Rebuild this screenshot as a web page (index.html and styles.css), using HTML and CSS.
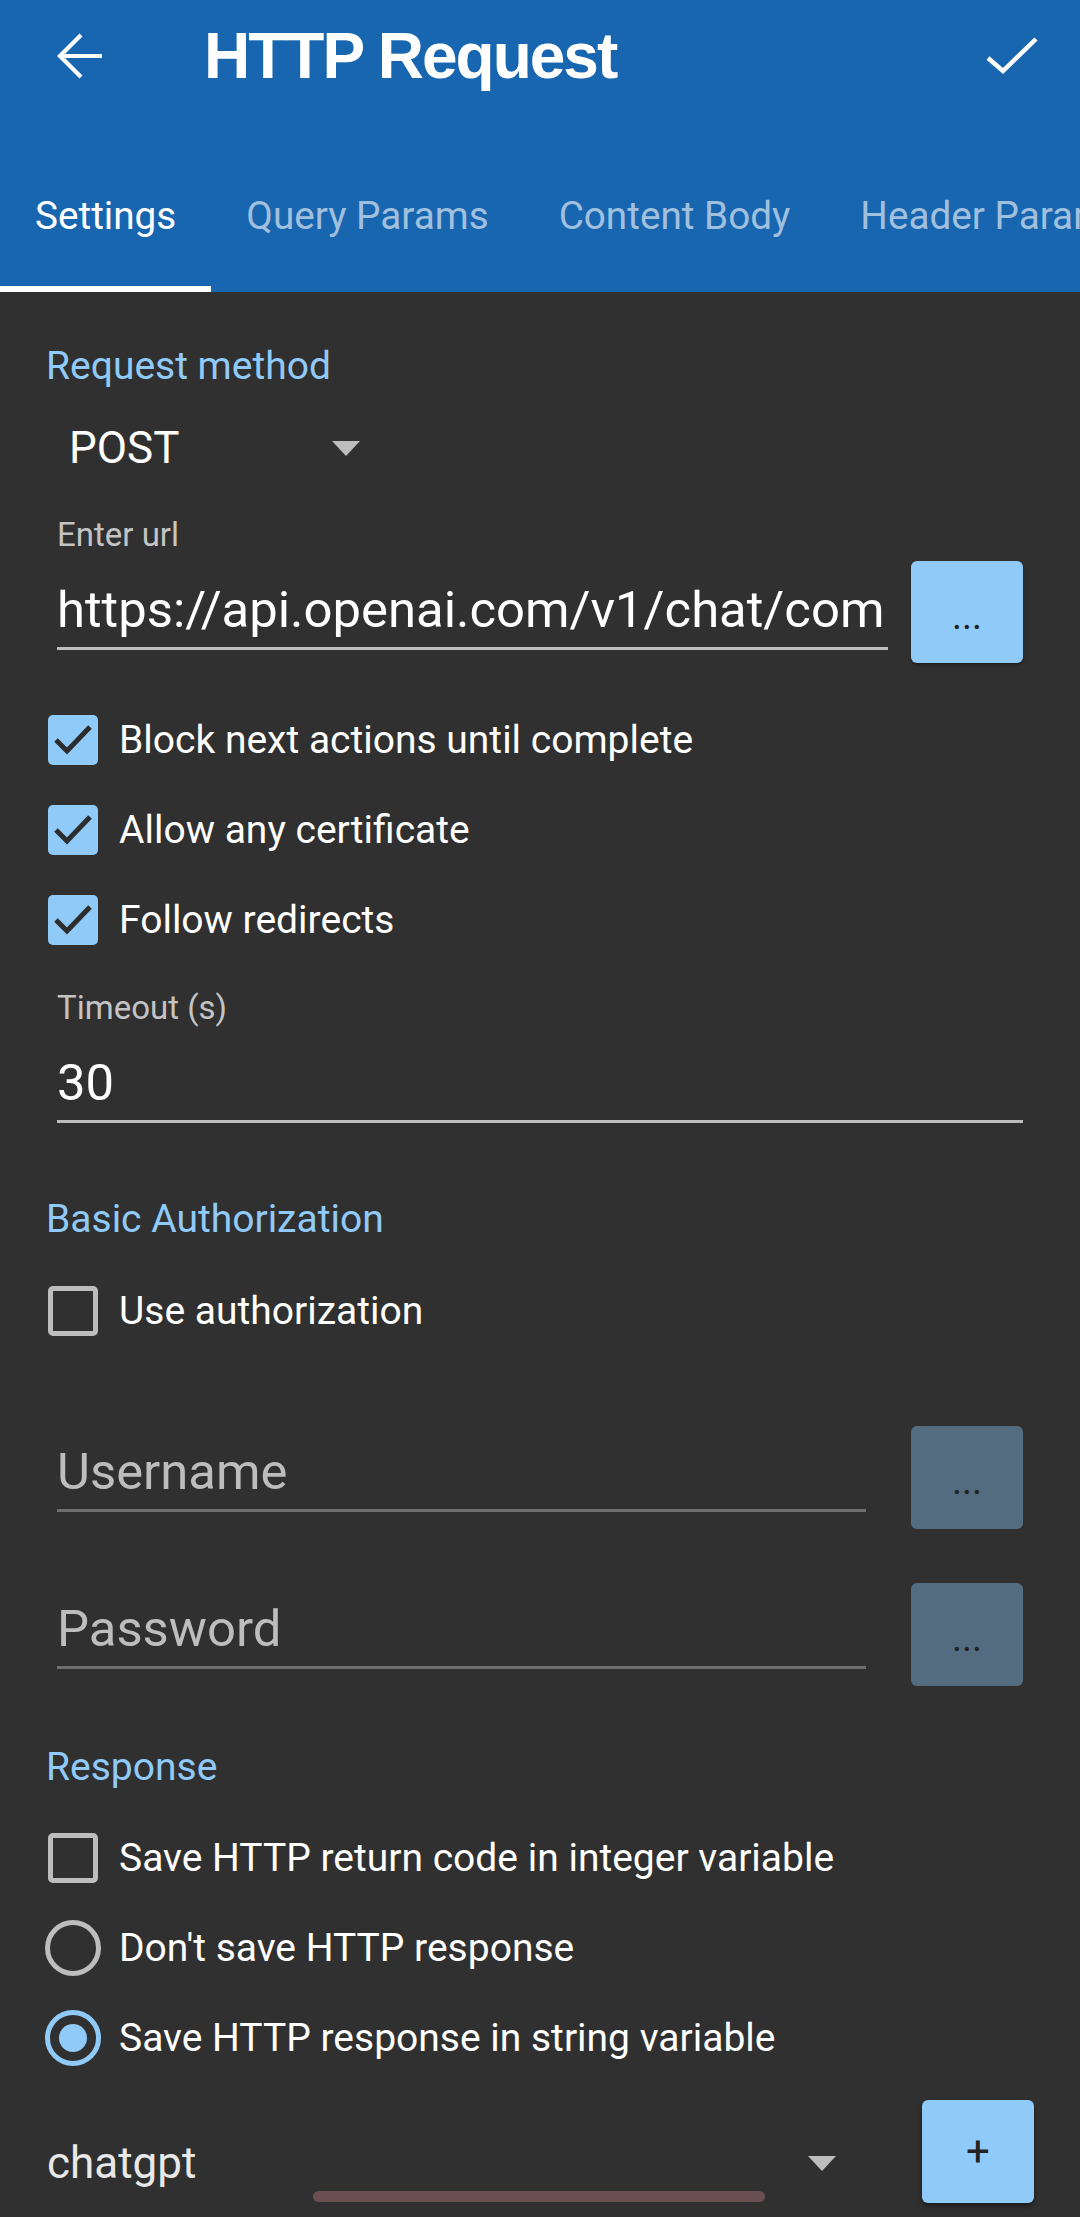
FILE: index.html
```html
<!DOCTYPE html>
<html lang="en">
<head>
<meta charset="utf-8">
<title>HTTP Request</title>
<link rel="stylesheet" href="styles.css">
</head>
<body>
<div class="screen">
  <header class="appbar">
    <div class="toolbar">
      <svg class="back" width="46" height="46" viewBox="0 0 46 46"><path d="M3 23H45M24 2L3 23l21 21" fill="none" stroke="#fff" stroke-width="4.2"/></svg>
      <h1 class="title">HTTP Request</h1>
      <svg class="done" width="56" height="42" viewBox="0 0 56 42"><path d="M4 23l15 13L52 4" fill="none" stroke="#fff" stroke-width="4.5"/></svg>
    </div>
    <nav class="tabs">
      <div class="tab active">Settings</div>
      <div class="tab">Query Params</div>
      <div class="tab">Content Body</div>
      <div class="tab">Header Params</div>
    </nav>
  </header>

  <main class="content">
    <div class="section-title">Request method</div>
    <div class="method">
      <span>POST</span>
      <span class="caret"></span>
    </div>

    <div class="label">Enter url</div>
    <div class="field-row">
      <div class="field"><div class="field-text">https://api.openai.com/v1/chat/com</div></div>
      <div class="dots-btn">...</div>
    </div>

    <div class="check-row first">
      <span class="slot"><span class="box checked"><svg width="50" height="50" viewBox="0 0 50 50"><path d="M8 25l11 11L42 12" fill="none" stroke="#2d2d2d" stroke-width="5"/></svg></span></span>
      <span>Block next actions until complete</span>
    </div>
    <div class="check-row">
      <span class="slot"><span class="box checked"><svg width="50" height="50" viewBox="0 0 50 50"><path d="M8 25l11 11L42 12" fill="none" stroke="#2d2d2d" stroke-width="5"/></svg></span></span>
      <span>Allow any certificate</span>
    </div>
    <div class="check-row">
      <span class="slot"><span class="box checked"><svg width="50" height="50" viewBox="0 0 50 50"><path d="M8 25l11 11L42 12" fill="none" stroke="#2d2d2d" stroke-width="5"/></svg></span></span>
      <span>Follow redirects</span>
    </div>

    <div class="label timeout-label">Timeout (s)</div>
    <div class="field timeout"><div class="field-text">30</div></div>

    <div class="section-title auth-title">Basic Authorization</div>
    <div class="check-row auth-check">
      <span class="slot"><span class="box"></span></span>
      <span>Use authorization</span>
    </div>

    <div class="field-row auth-row user-row">
      <div class="field disabled"><div class="field-text placeholder">Username</div></div>
      <div class="dots-btn disabled">...</div>
    </div>
    <div class="field-row auth-row pass-row">
      <div class="field disabled"><div class="field-text placeholder">Password</div></div>
      <div class="dots-btn disabled">...</div>
    </div>

    <div class="section-title response-title">Response</div>
    <div class="check-row response-check">
      <span class="slot"><span class="box"></span></span>
      <span>Save HTTP return code in integer variable</span>
    </div>
    <div class="check-row">
      <span class="slot"><span class="radio"></span></span>
      <span>Don't save HTTP response</span>
    </div>
    <div class="check-row">
      <span class="slot"><span class="radio on"><span class="radio-dot"></span></span></span>
      <span>Save HTTP response in string variable</span>
    </div>

    <div class="var-row">
      <div class="var-select">
        <span>chatgpt</span>
        <span class="caret"></span>
      </div>
      <div class="plus-btn">+</div>
    </div>
  </main>

  <div class="home-bar"></div>
</div>
</body>
</html>
```

FILE: styles.css
```css
* { box-sizing: border-box; }

body {
  margin: 0;
  background: #303030;
  font-family: Roboto, "Liberation Sans", sans-serif;
  color: #ffffff;
}

.screen {
  position: relative;
  width: 1080px;
  min-height: 2217px;
  overflow: hidden;
  background: #303030;
}

/* ---------- App bar ---------- */
.appbar {
  background: #1865b0;
}

.toolbar {
  height: 112px;
  display: flex;
  align-items: center;
  padding-left: 57px;
}

.back { flex-shrink: 0; display: block; }

.title {
  margin: 0 0 0 101px;
  font-family: "Liberation Sans", Arial, sans-serif;
  font-weight: 700;
  font-size: 64px;
  letter-spacing: -2px;
  color: #ffffff;
}

.done {
  margin-left: auto;
  margin-right: 40px;
  display: block;
}

.tabs {
  height: 180px;
  display: flex;
  white-space: nowrap;
  overflow: hidden;
}

.tab {
  flex-shrink: 0;
  height: 100%;
  padding: 32px 35px 0;
  display: flex;
  align-items: center;
  border-bottom: 6px solid transparent;
  font-size: 38.7px;
  color: rgba(255, 255, 255, 0.6);
}

.tab.active {
  color: #ffffff;
  border-bottom-color: #ffffff;
}

/* ---------- Content ---------- */
.content {
  padding: 48px 46px 0 46px;
}

.section-title {
  height: 52px;
  line-height: 52px;
  font-size: 39px;
  color: #90caf9;
}

.auth-title { margin-top: 70px; }
.response-title { margin-top: 55px; }

.method {
  margin: 24px 0 0 23px;
  width: 291px;
  height: 64px;
  display: flex;
  align-items: center;
  font-size: 44px;
  color: #ffffff;
}

.caret {
  margin-left: auto;
  width: 0;
  height: 0;
  border-left: 14px solid transparent;
  border-right: 14px solid transparent;
  border-top: 15px solid #bdbdbd;
}

.label {
  margin: 34px 0 0 11px;
  height: 41px;
  line-height: 41px;
  font-size: 33px;
  color: #c4c4c4;
}

.timeout-label { margin-top: 22px; }

.field-row {
  display: flex;
  align-items: flex-start;
  gap: 23px;
  margin: 6px 11px 0 11px;
}

.field {
  flex: 1;
  min-width: 0;
  padding: 19px 0 7px;
  border-bottom: 3px solid #bdbdbd;
}

.field-text {
  height: 60px;
  line-height: 60px;
  font-size: 50.8px;
  white-space: nowrap;
  color: #ffffff;
}

.field.disabled { border-bottom-color: #6e6e6e; padding-top: 16px; }
.placeholder { color: #bdbdbd; }

.timeout {
  margin: 0 11px 0 11px;
  padding-top: 25px;
}

.dots-btn {
  flex-shrink: 0;
  width: 112px;
  height: 102px;
  padding-top: 7px;
  border-radius: 6px;
  background: #90caf9;
  display: flex;
  align-items: center;
  justify-content: center;
  font-size: 38px;
  color: #222222;
  box-shadow: 0 2px 3px rgba(0, 0, 0, 0.35);
}

.dots-btn.disabled {
  height: 103px;
  background: #546c80;
  box-shadow: none;
}

.auth-row { gap: 45px; }
.user-row { margin-top: 70px; }
.pass-row { margin-top: 54px; }

/* ---------- Check rows ---------- */
.check-row {
  height: 90px;
  display: flex;
  align-items: center;
  font-size: 39px;
  color: #ffffff;
}

.check-row.first { margin-top: 32px; }
.auth-check { margin-top: 21px; }
.response-check { margin-top: 20px; }

.slot {
  width: 56px;
  height: 56px;
  margin: 0 18px 0 -1px;
  display: flex;
  align-items: center;
  justify-content: center;
  flex-shrink: 0;
}

.box {
  width: 50px;
  height: 50px;
  border-radius: 5px;
  border: 5px solid #bdbdbd;
  display: block;
}

.box.checked {
  border: none;
  background: #90caf9;
}

.box svg { display: block; }

.radio {
  width: 56px;
  height: 56px;
  border-radius: 50%;
  border: 5.5px solid #bdbdbd;
  display: flex;
  align-items: center;
  justify-content: center;
}

.radio.on { border-color: #90caf9; }

.radio-dot {
  width: 28px;
  height: 28px;
  border-radius: 50%;
  background: #90caf9;
}

/* ---------- Variable row ---------- */
.var-row {
  margin-top: 17px;
  height: 103px;
  display: flex;
  align-items: flex-start;
}

.var-select {
  width: 789px;
  height: 64px;
  margin-top: 31px;
  margin-left: 1px;
  display: flex;
  align-items: center;
  font-size: 44px;
  color: #e8e8e8;
}

.plus-btn {
  margin-left: auto;
  width: 112px;
  height: 103px;
  border-radius: 6px;
  background: #90caf9;
  display: flex;
  align-items: center;
  justify-content: center;
  font-size: 42px;
  color: #222222;
  box-shadow: 0 3px 5px rgba(0, 0, 0, 0.45);
}

.home-bar {
  position: absolute;
  left: 313px;
  top: 2191px;
  width: 452px;
  height: 11px;
  border-radius: 6px;
  background: #6b4e50;
}
```
